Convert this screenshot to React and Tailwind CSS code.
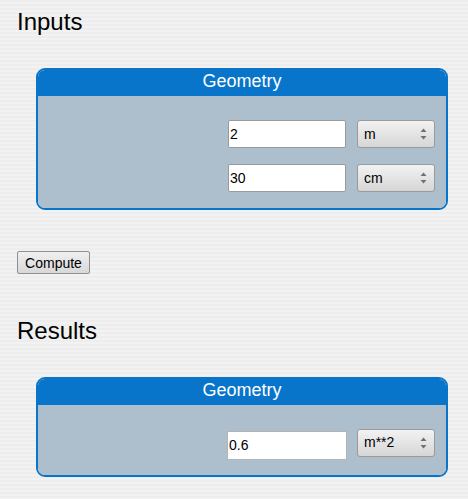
import React from 'react';

// Up/down arrows drawn the way the native select shows them
const SelectArrows = () => (
  <svg width="7" height="13" viewBox="0 0 7 13" className="absolute right-[7px] top-1/2 -translate-y-1/2">
    <path d="M3.5 1 L6.5 4.5 L0.5 4.5 Z" fill="#707070" />
    <path d="M3.5 12 L6.5 8.5 L0.5 8.5 Z" fill="#707070" />
  </svg>
);

const UnitSelect = ({ value, className = '' }) => (
  <div
    className={`relative w-[78px] h-[28px] rounded-[3px] border border-[#9a9a9a] bg-gradient-to-b from-[#f2f2f2] to-[#d6d6d6] text-[14px] text-black pl-[6px] flex items-center ${className}`}
  >
    {value}
    <SelectArrows />
  </div>
);

const NumberInput = ({ value, className = '' }) => (
  <input
    readOnly
    value={value}
    className={`h-[28px] w-[118px] rounded-[2px] border border-[#9a9a9a] bg-white px-[1px] text-[14px] text-black outline-none ${className}`}
  />
);

const Panel = ({ title, children, bodyClass }) => (
  <div className="ml-[19px] w-[412px] rounded-[9px] border-2 border-[#0875ca] overflow-hidden">
    <div className="bg-[#0875ca] text-white text-center text-[18px] leading-[22px] pb-[4px]">{title}</div>
    <div className={`bg-[#adbfcd] flex flex-col items-end pr-[11px] ${bodyClass}`}>{children}</div>
  </div>
);

export default function App() {
  return (
    <div
      className="min-h-[499px] w-full pl-[17px] pt-[8px] text-black bg-[repeating-linear-gradient(180deg,#ededed_0px,#ededed_2px,#f2f2f2_2px,#f2f2f2_4px)]"
      style={{ fontFamily: '"Liberation Sans", Arial, sans-serif' }}
    >
      <h2 className="text-[24px] leading-[28px]">Inputs</h2>

      <div className="mt-[32px]">
        <Panel title="Geometry" bodyClass="pt-[24px] pb-[16px] gap-[16px]">
          <div className="flex gap-[11px]">
            <NumberInput value="2" />
            <UnitSelect value="m" />
          </div>
          <div className="flex gap-[11px]">
            <NumberInput value="30" />
            <UnitSelect value="cm" />
          </div>
        </Panel>
      </div>

      <button className="mt-[41px] h-[23px] w-[73px] rounded-[2px] border border-[#8f8f8f] bg-gradient-to-b from-[#f0f0f0] to-[#d8d8d8] text-[14px] leading-none text-black">
        Compute
      </button>

      <h2 className="mt-[42px] text-[24px] leading-[28px]">Results</h2>

      <div className="mt-[32px]">
        <Panel title="Geometry" bodyClass="pt-[24px] pb-[15px]">
          <div className="flex items-start gap-[10px]">
            <NumberInput value="0.6" className="mt-[2px] h-[29px] w-[120px] rounded-none border-[#b4b4b4]" />
            <UnitSelect value="m**2" />
          </div>
        </Panel>
      </div>
    </div>
  );
}
